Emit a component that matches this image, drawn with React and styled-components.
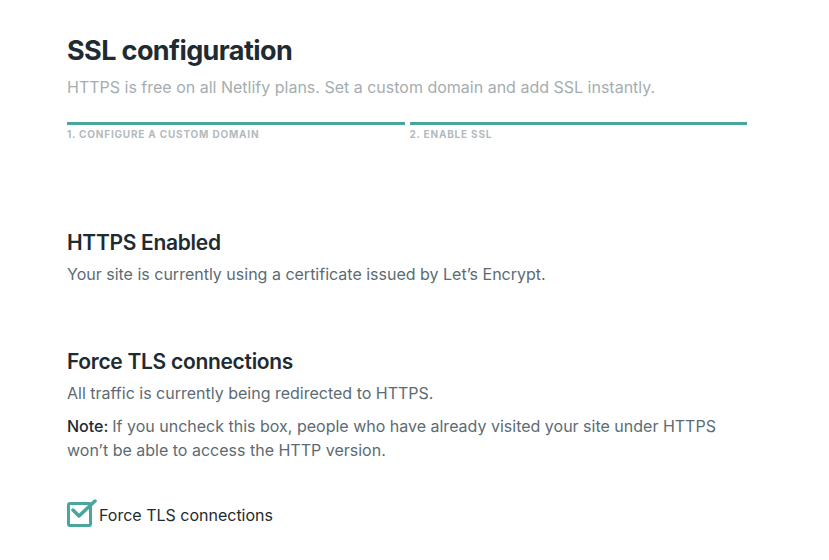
import React from 'react';
import styled, { createGlobalStyle } from 'styled-components';

const colors = {
  heading: "#1e2b31",
  text: "#5c6b73",
  muted: "#a5adb1",
  label: "#b3babd",
  teal: "#48a79a"
}

const GlobalStyle = createGlobalStyle`
  body {
    margin: 0;
    background: #fff;
    font-family: Inter, "Noto Sans", sans-serif;
    -webkit-font-smoothing: antialiased;
  }
`;

const Page = styled.div`
  width: 680px;
  padding: 33px 0 0 67px;
`;

const Title = styled.h1`
  margin: 0;
  font-size: 27px;
  font-weight: 700;
  letter-spacing: -0.6px;
  line-height: 36px;
  color: ${colors.heading};
`;

const Lead = styled.p`
  margin: 6px 0 0;
  font-size: 16px;
  line-height: 24px;
  color: ${colors.muted};
`;

const Steps = styled.div`
  display: flex;
  gap: 5px;
  margin-top: 23px;
`;

const Step = styled.div`
  flex: 1;
  border-top: 3px solid ${colors.teal};
  padding-top: 3px;
  font-size: 10px;
  font-weight: 700;
  letter-spacing: 0.8px;
  text-transform: uppercase;
  color: ${colors.label};
  line-height: 13px;
`;

const Section = styled.section`
  margin-top: ${p => p.$top}px;
`;

const Heading = styled.h2`
  margin: 0;
  font-size: 21px;
  font-weight: 600;
  letter-spacing: -0.3px;
  line-height: 26px;
  color: ${colors.heading};
`;

const Text = styled.p`
  margin: ${p => p.$top || 6}px 0 0;
  font-size: 16px;
  line-height: 24px;
  color: ${colors.text};
`;

const Note = styled.strong`
  font-weight: 500;
  color: ${colors.heading};
  margin-right: 4px;
`;

const CheckRow = styled.label`
  display: flex;
  align-items: center;
  gap: 7px;
  margin-top: 40px;
  font-size: 16px;
  color: ${colors.heading};
`;

const Box = styled.span`
  position: relative;
  width: 19px;
  height: 19px;
  border: 3px solid ${colors.teal};
  border-radius: 3px;
  flex-shrink: 0;

  svg {
    position: absolute;
    left: 0px;
    top: -7px;
  }
`;

const Checkbox = () => (
  <Box>
    <svg width="28" height="22" viewBox="0 0 28 22">
      <path d="M3 12 L9 18 L25 3" fill="none" stroke={colors.teal} strokeWidth="3.5" strokeLinecap="round" strokeLinejoin="round" />
    </svg>
  </Box>
)

const App = () => {
  return (
    <React.Fragment>
      <GlobalStyle />
      <Page>
        <Title>SSL configuration</Title>
        <Lead>HTTPS is free on all Netlify plans. Set a custom domain and add SSL instantly.</Lead>
        <Steps>
          <Step>1. Configure a custom domain</Step>
          <Step>2. Enable SSL</Step>
        </Steps>
        <Section $top={89}>
          <Heading>HTTPS Enabled</Heading>
          <Text>Your site is currently using a certificate issued by Let’s Encrypt.</Text>
        </Section>
        <Section $top={63}>
          <Heading>Force TLS connections</Heading>
          <Text>All traffic is currently being redirected to HTTPS.</Text>
          <Text $top={9}><Note>Note:</Note>If you uncheck this box, people who have already visited your site under HTTPS won’t be able to access the HTTP version.</Text>
        </Section>
        <CheckRow>
          <Checkbox />
          Force TLS connections
        </CheckRow>
      </Page>
    </React.Fragment>
  )
}

export default App
